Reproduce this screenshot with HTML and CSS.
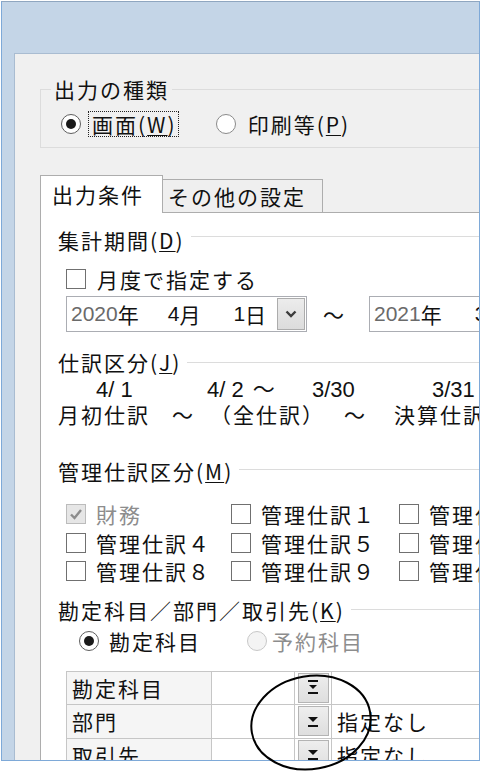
FILE: index.html
```html
<!DOCTYPE html>
<html lang="ja">
<head>
<meta charset="utf-8">
<title>出力条件</title>
<link rel="stylesheet" href="styles.css">
</head>
<body>
<div class="screen">
  <div class="window">
    <div class="titlebar"></div>
    <div class="client">
      <fieldset class="group">
        <legend class="group-title">出力の種類</legend>
        <div class="radio-row">
          <span class="radio radio-on"></span>
          <span class="focus-label">画面(<u>W</u>)</span>
          <span class="radio radio-off radio-second"></span>
          <span class="radio-text">印刷等(<u>P</u>)</span>
        </div>
      </fieldset>

      <div class="tabs">
        <div class="tab tab-active">出力条件</div>
        <div class="tab tab-inactive">その他の設定</div>
      </div>

      <div class="panel">
        <div class="section-head head-period"><span class="head-text">集計期間(<u>D</u>)</span><i class="rule"></i></div>

        <div class="check-row">
          <span class="checkbox"></span><span class="check-text">月度で指定する</span>
        </div>

        <div class="date-row">
          <div class="combo combo-from">
            <span class="num muted">2020</span><span class="kanji">年</span><span class="num d-month">4</span><span class="kanji">月</span><span class="num d-day">1</span><span class="kanji">日</span>
            <span class="drop-btn"><svg width="12" height="8" viewBox="0 0 12 8"><path d="M1.5 1.5 L6 6 L10.5 1.5" fill="none" stroke="#3c3c3c" stroke-width="2.4"/></svg></span>
          </div>
          <span class="tilde">～</span>
          <div class="combo combo-to">
            <span class="num muted">2021</span><span class="kanji">年</span><span class="num d-month-to">3</span><span class="kanji">月</span>
          </div>
        </div>

        <div class="section-head head-journal"><span class="head-text">仕訳区分(<u>J</u>)</span><i class="rule"></i></div>

        <div class="journal-dates">
          <span class="jd jd-1">4/ 1</span><span class="jd jd-2">4/ 2 <span class="jd-tilde">～</span></span><span class="jd jd-3">3/30</span><span class="jd jd-4">3/31</span>
        </div>
        <div class="journal-names">
          <span class="jn jn-1">月初仕訳</span><span class="jn jn-2">～</span><span class="jn jn-3">（全仕訳）</span><span class="jn jn-4">～</span><span class="jn jn-5">決算仕訳</span>
        </div>

        <div class="section-head head-mgmt"><span class="head-text">管理仕訳区分(<u>M</u>)</span><i class="rule"></i></div>

        <div class="check-grid">
          <div class="check-item disabled"><span class="checkbox checkbox-dis"><svg width="14" height="12" viewBox="0 0 14 12"><path d="M2 6.5 L5.5 10 L12 2" fill="none" stroke="#8c8c8c" stroke-width="2.4"/></svg></span><span class="check-text">財務</span></div>
          <div class="check-item"><span class="checkbox"></span><span class="check-text">管理仕訳１</span></div>
          <div class="check-item"><span class="checkbox"></span><span class="check-text">管理仕訳２</span></div>
          <div class="check-item"><span class="checkbox"></span><span class="check-text">管理仕訳４</span></div>
          <div class="check-item"><span class="checkbox"></span><span class="check-text">管理仕訳５</span></div>
          <div class="check-item"><span class="checkbox"></span><span class="check-text">管理仕訳６</span></div>
          <div class="check-item"><span class="checkbox"></span><span class="check-text">管理仕訳８</span></div>
          <div class="check-item"><span class="checkbox"></span><span class="check-text">管理仕訳９</span></div>
          <div class="check-item"><span class="checkbox"></span><span class="check-text">管理仕訳10</span></div>
        </div>

        <div class="section-head head-target"><span class="head-text">勘定科目／部門／取引先(<u>K</u>)</span><i class="rule"></i></div>

        <div class="target-row">
          <span class="radio radio-on"></span><span class="target-text">勘定科目</span>
          <span class="radio radio-dis"></span><span class="target-text target-dis">予約科目</span>
        </div>

        <div class="grid-table">
          <div class="cell cell-head">勘定科目</div>
          <div class="cell cell-code"></div>
          <div class="cell cell-btn"><span class="pick-btn"><svg width="12" height="15" viewBox="0 0 12 15"><rect x="1" y="0" width="10" height="2" fill="#111"/><path d="M2 5 H10 L6 9 Z" fill="#111"/><rect x="1" y="12" width="10" height="2" fill="#111"/></svg></span></div>
          <div class="cell cell-name"></div>

          <div class="cell cell-head">部門</div>
          <div class="cell cell-code"></div>
          <div class="cell cell-btn"><span class="pick-btn"><svg width="12" height="15" viewBox="0 0 12 15"><path d="M1 3 H11 L6 8 Z" fill="#111"/><rect x="1" y="11" width="10" height="2" fill="#111"/></svg></span></div>
          <div class="cell cell-name">指定なし</div>

          <div class="cell cell-head">取引先</div>
          <div class="cell cell-code"></div>
          <div class="cell cell-btn"><span class="pick-btn"><svg width="12" height="15" viewBox="0 0 12 15"><path d="M1 3 H11 L6 8 Z" fill="#111"/><rect x="1" y="11" width="10" height="2" fill="#111"/></svg></span></div>
          <div class="cell cell-name">指定なし</div>
        </div>
      </div>
    </div>
  </div>

  <svg class="annot" width="481" height="776" viewBox="0 0 481 776">
    <ellipse cx="311" cy="722.5" rx="60" ry="46.5" transform="rotate(-10 311 722.5)" fill="none" stroke="#000" stroke-width="2"/>
  </svg>
</div>
</body>
</html>
```

FILE: styles.css
```css
html, body {
  margin: 0;
  padding: 0;
  background: #ffffff;
}

body {
  font-family: "Noto Sans CJK JP", "Noto Sans", sans-serif;
  font-size: 21px;
  line-height: 24px;
  color: #111;
}

u {
  text-decoration-thickness: 1px;
  text-underline-offset: 2px;
}

.screen {
  position: relative;
  width: 481px;
  height: 776px;
  overflow: hidden;
  background: #fff;
}

.window {
  margin: 1px 0 0 1px;
  width: 479px;
  height: 760px;
  box-sizing: border-box;
  border: 1px solid #7ea9d8;
  border-top-color: #8fa6c0;
  background: #c4d5e7;
  display: flex;
  flex-direction: column;
}

.titlebar {
  height: 51px;
  flex: none;
}

.client {
  flex: 1;
  margin-left: 12px;
  background: #f0f0f0;
  border-left: 1px solid #a9bcd1;
  border-top: 1px solid #a9bcd1;
  overflow: hidden;
  padding: 23px 0 0 25px;
  min-height: 0;
}

/* ---- group box ---- */
.group {
  margin: 0;
  padding: 10px 0 10px 10px;
  border: 1px solid #dcdcdc;
  width: 600px;
  min-width: 0;
}

.group-title {
  padding: 0 3px;
  letter-spacing: 2px;
  line-height: 24px;
}

.radio-row {
  display: flex;
  align-items: center;
  height: 26px;
  letter-spacing: 2px;
}

.radio {
  flex: none;
  width: 20px;
  height: 20px;
  box-sizing: border-box;
  border-radius: 50%;
  border: 1px solid #5e5e5e;
  background: #fff;
  display: flex;
  align-items: center;
  justify-content: center;
}

.radio-on::after {
  content: "";
  width: 10px;
  height: 10px;
  border-radius: 50%;
  background: #1a1a1a;
}

.radio-row .radio-on {
  margin-left: 10px;
}

.radio-off {
  border-color: #8a8a8a;
}

.radio-second {
  margin-left: 37px;
}

.focus-label {
  margin-left: 7px;
  border: 1px dotted #222;
  padding: 0 1px 0 3px;
  height: 26px;
  box-sizing: border-box;
  line-height: 24px;
}

.radio-text {
  margin-left: 12px;
}

/* ---- tabs ---- */
.tabs {
  display: flex;
  align-items: flex-end;
  margin-top: 27px;
}

.tab {
  box-sizing: border-box;
  border: 1px solid #adadad;
  border-bottom: none;
  letter-spacing: 2px;
}

.tab-active {
  position: relative;
  z-index: 1;
  width: 123px;
  height: 38px;
  margin-bottom: -1px;
  background: #fff;
  padding: 6px 0 0 11px;
}

.tab-inactive {
  width: 160px;
  height: 33px;
  border-left: none;
  background: #efefef;
  padding: 4px 0 0 5px;
}

/* ---- panel ---- */
.panel {
  background: #fff;
  border-left: 1px solid #adadad;
  border-top: 1px solid #adadad;
  height: 600px;
  padding: 15px 0 0 17px;
  width: 600px;
}

.section-head {
  display: flex;
  align-items: flex-start;
  height: 24px;
  letter-spacing: 2px;
  white-space: nowrap;
}

.rule {
  flex: 1;
  height: 1px;
  background: #dcdcdc;
  margin-top: 10px;
  margin-left: 6px;
}

.head-period .rule { margin-top: 8px; }

.head-journal { margin-top: 18px; }
.head-journal .rule { margin-top: 12px; }

.head-mgmt { margin-top: 34px; }
.head-mgmt .rule { margin-top: 10px; }

.head-target { margin-top: 10px; }
.head-target .rule { margin-top: 11px; }

.checkbox {
  flex: none;
  width: 20px;
  height: 20px;
  box-sizing: border-box;
  border: 1px solid #707070;
  background: #fff;
  display: flex;
  align-items: center;
  justify-content: center;
}

.checkbox-dis {
  border-color: #bcbcbc;
  background: #e6e6e6;
}

.check-row {
  display: flex;
  align-items: center;
  height: 24px;
  margin-top: 15px;
  margin-left: 8px;
  letter-spacing: 2px;
}

.check-text {
  margin-left: 11px;
  white-space: nowrap;
}

/* ---- dates ---- */
.date-row {
  display: flex;
  align-items: center;
  margin-top: 5px;
  margin-left: 8px;
  height: 36px;
}

.combo {
  box-sizing: border-box;
  height: 36px;
  border: 1px solid #abadb3;
  background: #fff;
  display: flex;
  align-items: center;
  padding-left: 4px;
  white-space: nowrap;
}

.combo-from { width: 241px; }
.combo-to { width: 200px; flex: none; }

.num {
  font-family: "Liberation Sans", Arial, sans-serif;
  font-size: 21px;
  white-space: pre;
}

.muted { color: #6a6a6a; }

.kanji {
  width: 26px;
  flex: none;
}

.d-month { margin-left: 24px; }
.d-day { margin-left: 28px; }
.d-month-to { margin-left: 28px; }

.drop-btn {
  margin-left: auto;
  margin-right: 1px;
  width: 28px;
  height: 32px;
  box-sizing: border-box;
  border: 1px solid #acacac;
  background: linear-gradient(#ececec, #dcdcdc);
  display: flex;
  align-items: center;
  justify-content: center;
}

.tilde {
  margin-left: 16px;
  width: 46px;
  flex: none;
}

/* ---- journal ---- */
.journal-dates {
  display: flex;
  margin-top: 5px;
  height: 22px;
  line-height: 22px;
  padding-left: 38px;
  font-family: "Liberation Sans", Arial, "Noto Sans CJK JP", sans-serif;
  font-size: 22px;
  white-space: pre;
}

.jd { flex: none; }
.jd-1 { width: 111px; }
.jd-2 { width: 105px; }
.jd-3 { width: 120px; }

.jd-tilde {
  margin-left: 3px;
}

.journal-names {
  display: flex;
  margin-top: 1px;
  height: 23px;
  line-height: 24px;
  white-space: nowrap;
  letter-spacing: 2px;
}

.jn { flex: none; }
.jn-1 { width: 114px; }
.jn-2 { width: 38px; }
.jn-3 { width: 134px; }
.jn-4 { width: 50px; }

/* ---- management checks ---- */
.check-grid {
  display: grid;
  grid-template-columns: 165px 168px 200px;
  grid-auto-rows: 28.5px;
  margin-top: 19px;
  margin-left: 8px;
  letter-spacing: 2px;
}

.check-item {
  display: flex;
  align-items: center;
  height: 24px;
}

.check-item .check-text { margin-left: 10px; }

.disabled .check-text { color: #8d8d8d; }

/* ---- account target ---- */
.target-row {
  display: flex;
  align-items: center;
  height: 24px;
  margin-top: 7px;
  margin-left: 21px;
  letter-spacing: 2px;
}

.target-text { margin-left: 10px; }

.radio-dis {
  margin-left: 46px;
  border-color: #c8c8c8;
  background: #f4f4f4;
}

.target-dis {
  margin-left: 5px;
  color: #8d8d8d;
}

.grid-table {
  display: grid;
  grid-template-columns: 145px 83px 37px 300px;
  grid-auto-rows: 33.5px;
  margin-top: 18px;
  margin-left: 8px;
  border-top: 1px solid #c6c6c6;
  border-left: 1px solid #c6c6c6;
  width: max-content;
}

.cell {
  box-sizing: border-box;
  border-right: 1px solid #c6c6c6;
  border-bottom: 1px solid #c6c6c6;
  display: flex;
  align-items: center;
  padding-left: 5px;
  letter-spacing: 2px;
  white-space: nowrap;
}

.cell-head { background: #f5f5f5; }

.cell-btn {
  padding: 0;
  justify-content: center;
}

.pick-btn {
  width: 31px;
  height: 30px;
  box-sizing: border-box;
  border: 1px solid #b4b4b4;
  background: linear-gradient(#eeeeee, #dedede);
  display: flex;
  align-items: center;
  justify-content: center;
}

.annot {
  position: absolute;
  left: 0;
  top: 0;
  pointer-events: none;
}
```
